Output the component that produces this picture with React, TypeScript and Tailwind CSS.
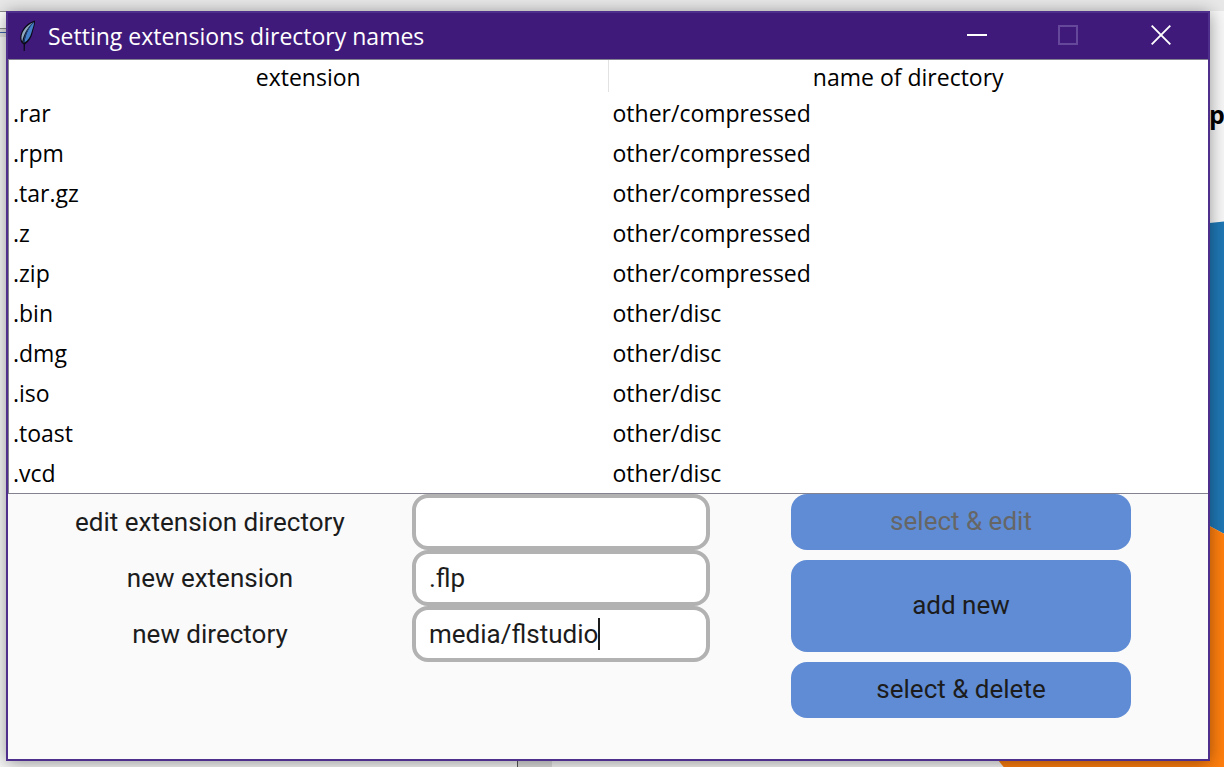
import { useState } from "react";

const rows: [string, string][] = [
  [".rar", "other/compressed"],
  [".rpm", "other/compressed"],
  [".tar.gz", "other/compressed"],
  [".z", "other/compressed"],
  [".zip", "other/compressed"],
  [".bin", "other/disc"],
  [".dmg", "other/disc"],
  [".iso", "other/disc"],
  [".toast", "other/disc"],
  [".vcd", "other/disc"],
];

function Feather() {
  return (
    <svg viewBox="0 0 16 32" className="h-8 w-4 shrink-0" aria-hidden="true">
      <path d="M16 0.5 C10 2 5 6.5 2.6 12 C0.8 16 0.8 19.5 2.4 22.5 L4.6 24.5 L4.6 31 L5.8 31 L6 24.5 C9.8 22 12.6 17.5 13.6 12.5 C14.4 8.5 16.2 5 16 0.5Z" fill="#0c0a18" />
      <path d="M15 2 C10 7 6.8 14 5.4 22.5 C9 20.5 11.6 16.5 12.6 12 C13.4 8.5 15.2 5.5 15 2Z" fill="#4480c8" />
      <path d="M14 2.4 C9 4.4 5.2 8.8 3.4 13 C2.2 16.2 2 18.8 3.2 21.4 C4.8 14 8.2 8 14 2.4Z" fill="#8fa9bf" />
      <path d="M13 3.6 C8.4 9 5.8 15 4.6 22.5" fill="none" stroke="#24508c" strokeWidth="0.8" />
    </svg>
  );
}

function TitleBar() {
  return (
    <header className="flex h-[46px] items-center bg-[#3f1a7b] pl-[11px] text-white">
      <Feather />
      <h1 className="ml-[13px] flex-1 text-[23px] leading-[32px]">Setting extensions directory names</h1>
      <div className="flex h-full items-center pb-[2px]">
        <button aria-label="Minimize" className="flex h-full w-[90px] items-center justify-center">
          <svg viewBox="0 0 20 20" className="size-5" aria-hidden="true">
            <path d="M0 10h20" stroke="white" strokeWidth="2" />
          </svg>
        </button>
        <button aria-label="Maximize" disabled className="flex h-full w-[92px] items-center justify-center">
          <svg viewBox="0 0 20 20" className="size-5" aria-hidden="true">
            <rect x="1" y="1" width="18" height="18" fill="none" stroke="#65489a" strokeWidth="2" />
          </svg>
        </button>
        <button aria-label="Close" className="flex h-full w-[94px] items-center justify-center">
          <svg viewBox="0 0 20 20" className="size-5" aria-hidden="true">
            <path d="M0.7 0.7l18.6 18.6M19.3 0.7L0.7 19.3" stroke="white" strokeWidth="1.9" />
          </svg>
        </button>
      </div>
    </header>
  );
}

function Backdrop() {
  return (
    <div className="absolute inset-0 overflow-hidden" aria-hidden="true">
      <div className="h-[11px] bg-[#e8e8e8]" />
      <div className="h-[18px] w-3 border-y border-[#8c8c8c] bg-white" />
      <div className="h-2 w-3 bg-[#e2e2e2] pt-[3px]">
        <div className="h-px bg-[#3a5fa8]" />
      </div>
      <div className="absolute bottom-0 left-[517px] h-3 w-[35px] border-l border-[#555] bg-[#dedede]" />
      <span className="absolute top-[98px] left-[1209px] text-[25px] leading-[32px] font-bold text-black">p</span>
      <svg viewBox="0 0 240 560" className="absolute top-[215px] left-[990px] h-[560px] w-[240px]">
        <path d="M210 9 L240 6 L240 322 L210 306Z" fill="#1f77b4" />
        <path d="M210 306 L240 322 L240 560 L20 560 L8 545 L0 530Z" fill="#ff7f0e" />
      </svg>
    </div>
  );
}

const entryClass =
  "h-14 w-full rounded-[16px] border-4 border-[#b2b2b2] bg-white px-[13px] font-[Roboto,sans-serif] text-[26px] leading-[32px] text-[#1c1c1c] outline-none";
const buttonClass =
  "w-[340px] rounded-[16px] bg-[#608cd5] pb-[2px] font-[Roboto,sans-serif] text-[26px] leading-[32px] text-[#1c1c1c] disabled:text-[#666]";

export default function App() {
  const [edit, setEdit] = useState("");
  const [extension, setExtension] = useState(".flp");
  const [directory, setDirectory] = useState("media/flstudio");

  return (
    <div className="relative flex min-h-screen bg-[#f7f7f7] pt-[11px] pr-[14px] pb-[6px] pl-[6px] font-['Open_Sans','Noto_Sans',sans-serif]">
      <Backdrop />
      <main className="relative flex flex-1 flex-col border-2 border-[#4f2f8c] bg-[#fafafa] shadow-[0_2px_16px_rgba(0,0,0,0.4)]">
        <TitleBar />
        <div className="border-y border-l border-[#828290] bg-white">
          <table className="w-full table-fixed border-collapse text-[23px] leading-[32px] text-black">
            <thead>
              <tr className="h-[33px]">
                <th className="p-0 align-top font-normal">
                  <div className="h-8 border-r border-[#e2e2e2] pt-px">extension</div>
                </th>
                <th className="p-0 align-top font-normal">
                  <div className="h-8 pt-px">name of directory</div>
                </th>
              </tr>
            </thead>
            <tbody>
              {rows.map(([ext, dir]) => (
                <tr key={ext} className="h-10">
                  <td className="p-0 pl-1">{ext}</td>
                  <td className="p-0 pl-1">{dir}</td>
                </tr>
              ))}
            </tbody>
          </table>
        </div>
        <form className="grid grid-cols-[404fr_298fr_498fr]" onSubmit={(e) => e.preventDefault()}>
          <div className="flex flex-col text-center font-[Roboto,sans-serif] text-[26px] leading-[56px] text-[#1c1c1c]">
            <label htmlFor="edit">edit extension directory</label>
            <label htmlFor="extension">new extension</label>
            <label htmlFor="directory">new directory</label>
          </div>
          <div className="flex flex-col">
            <input id="edit" className={entryClass} value={edit} onChange={(e) => setEdit(e.target.value)} />
            <input id="extension" className={entryClass} value={extension} onChange={(e) => setExtension(e.target.value)} />
            <div className="relative">
              <input id="directory" className={entryClass} value={directory} onChange={(e) => setDirectory(e.target.value)} />
              <span className="absolute top-3 left-[186px] h-8 w-[2px] bg-[#1c1c1c]" />
            </div>
          </div>
          <div className="flex flex-col items-center gap-[10px] pl-1">
            <button type="button" disabled className={`${buttonClass} h-14`}>select &amp; edit</button>
            <button type="submit" className={`${buttonClass} h-[92px]`}>add new</button>
            <button type="button" className={`${buttonClass} h-14`}>select &amp; delete</button>
          </div>
        </form>
      </main>
    </div>
  );
}
